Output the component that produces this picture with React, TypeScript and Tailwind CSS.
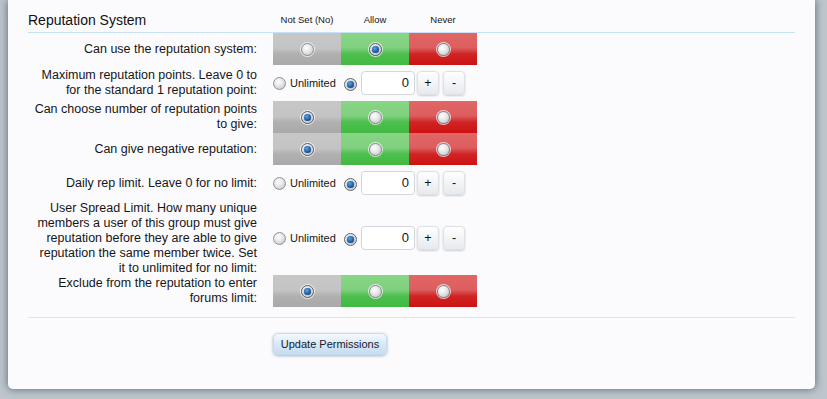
import React from "react"

type Choice = 0 | 1 | 2

type Row =
  | { kind: "yesno"; label: React.ReactNode; value: Choice; h: string }
  | { kind: "number"; label: React.ReactNode; h: string }

const rows: Row[] = [
  { kind: "yesno", label: "Can use the reputation system:", value: 1, h: "h-[32px]" },
  {
    kind: "number",
    label: (
      <>
        Maximum reputation points. Leave 0 to
        <br />
        for the standard 1 reputation point:
      </>
    ),
    h: "h-[36px]",
  },
  {
    kind: "yesno",
    label: (
      <>
        Can choose number of reputation points
        <br />
        to give:
      </>
    ),
    value: 0,
    h: "h-[32px]",
  },
  { kind: "yesno", label: "Can give negative reputation:", value: 0, h: "h-[32px]" },
  { kind: "number", label: "Daily rep limit. Leave 0 for no limit:", h: "h-[36px]" },
  {
    kind: "number",
    label: (
      <>
        User Spread Limit. How many unique
        <br />
        members a user of this group must give
        <br />
        reputation before they are able to give
        <br />
        reputation the same member twice. Set
        <br />
        it to unlimited for no limit:
      </>
    ),
    h: "h-[74px]",
  },
  {
    kind: "yesno",
    label: (
      <>
        Exclude from the reputation to enter
        <br />
        forums limit:
      </>
    ),
    value: 0,
    h: "h-[32px]",
  },
]

const cells = [
  "bg-[linear-gradient(to_bottom,#c7c7c7_0%,#c4c4c4_48%,#b0b0b0_66%,#a9a9a9_100%)]",
  "bg-[linear-gradient(to_bottom,#86d686_0%,#80d080_46%,#4cbf4c_66%,#43b943_100%)]",
  "bg-[linear-gradient(to_bottom,#e26666_0%,#dc5e5e_46%,#d02424_66%,#cb1212_100%)]",
]

function Radio({ checked }: { checked?: boolean }) {
  return (
    <span
      className={`inline-flex size-[13px] shrink-0 items-center justify-center rounded-full border ${
        checked ? "border-[#5b6470]" : "border-[#8d9196]"
      } bg-[radial-gradient(circle_at_40%_35%,#ffffff_0%,#e6e6e6_45%,#bcbcbc_100%)] shadow-[0_0_0_1px_rgba(255,255,255,0.7)]`}
    >
      {checked && (
        <span className="size-[7px] rounded-full bg-[radial-gradient(circle_at_40%_35%,#5aa6e6_0%,#1d5fa6_55%,#0b3366_100%)] shadow-[0_0_1px_#041b38]" />
      )}
    </span>
  )
}

function StepButton({ children }: { children: React.ReactNode }) {
  return (
    <span className="flex h-[24px] w-[22px] items-center justify-center rounded-[4px] border border-[#dde1e6] bg-[linear-gradient(to_bottom,#ffffff,#e6e9ee)] text-[12.5px] text-[#111] shadow-[0_1px_2px_rgba(0,0,0,0.18)]">
      {children}
    </span>
  )
}

export default function App() {
  return (
    <div
      className="h-[399px] w-[827px] overflow-hidden bg-[#bec6cc] text-[#161616]"
      style={{ fontFamily: '"Liberation Sans", Arial, sans-serif' }}
    >
      <div className="ml-2 flex h-[389px] w-[807px] flex-col rounded-b-[5px] bg-[#fbfbfe] px-5 shadow-[0_0_9px_rgba(60,75,90,0.8)]">
        <div className="flex h-[33px] items-end border-b border-[#c8e1f4] pb-[3px]">
          <div className="w-[245px] text-[14px] leading-[18px] text-[#111]">Reputation System</div>
          <div className="flex text-[9.5px] leading-[12px]">
            <span className="w-[68px] pb-[3px] text-center">Not Set (No)</span>
            <span className="w-[68px] pb-[3px] text-center">Allow</span>
            <span className="w-[68px] pb-[3px] text-center">Never</span>
          </div>
        </div>

        {rows.map((row, i) => (
          <div key={i} className={`flex ${row.h}`}>
            <div className="flex w-[245px] items-center justify-end pr-4 text-right text-[12.5px] leading-[15px]">
              <span>{row.label}</span>
            </div>
            {row.kind === "yesno" ? (
              <div className="flex">
                {cells.map((c, j) => (
                  <div key={j} className={`flex w-[68px] items-center justify-center ${c}`}>
                    <Radio checked={row.value === j} />
                  </div>
                ))}
              </div>
            ) : (
              <div className="flex items-center">
                <Radio />
                <span className="ml-1 w-[46px] text-[11px]">Unlimited</span>
                <span className="ml-2">
                  <Radio checked />
                </span>
                <span className="ml-1 flex h-[24px] w-[54px] items-center justify-end rounded-[4px] border border-[#d3d6db] bg-white pr-[5px] text-[13px]">
                  0
                </span>
                <span className="ml-[2px]">
                  <StepButton>+</StepButton>
                </span>
                <span className="ml-1">
                  <StepButton>-</StepButton>
                </span>
              </div>
            )}
          </div>
        ))}

        <div className="mt-[10px] border-b border-[#d6e6f2]" />

        <div className="flex pt-[15px]">
          <div className="w-[245px]" />
          <button className="h-[22px] w-[114px] rounded-[5px] border border-[#c5dcec] bg-[linear-gradient(to_bottom,#f4f9fd,#d6e8f6_55%,#c4ddf1)] text-[11px] text-[#15202b] shadow-[0_1px_3px_rgba(60,90,120,0.45)]">
            Update Permissions
          </button>
        </div>
      </div>
    </div>
  )
}
